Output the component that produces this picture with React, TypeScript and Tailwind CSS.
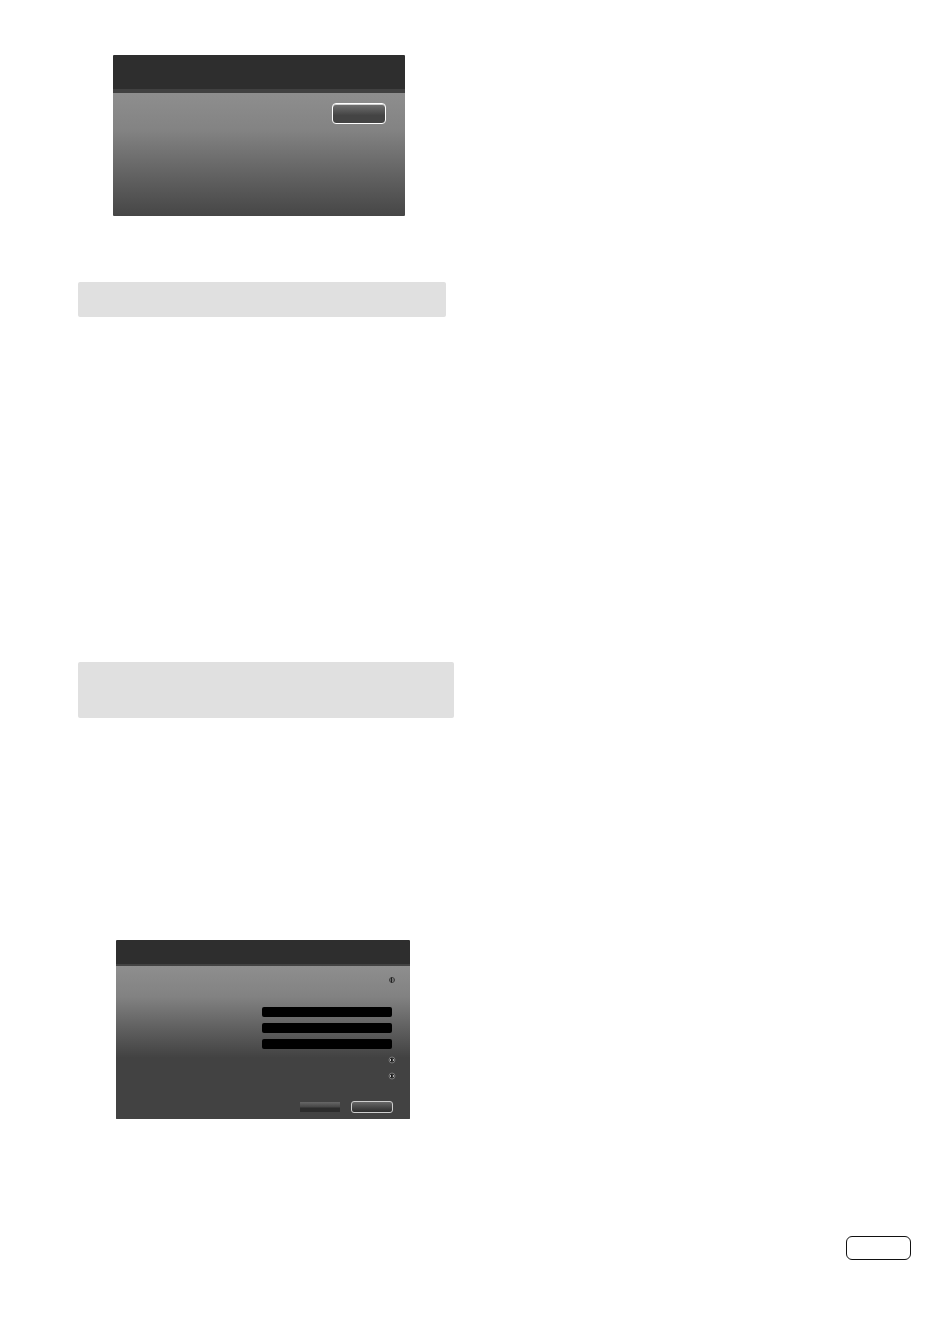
type Row = { kind: 'blank' } | { kind: 'option'; label: string; dark: boolean } | { kind: 'field'; label: string };

const rows: Row[] = [
  { kind: 'option', label: 'First option', dark: true },
  { kind: 'blank' },
  { kind: 'field', label: 'First field' },
  { kind: 'field', label: 'Second field' },
  { kind: 'field', label: 'Third field' },
  { kind: 'option', label: 'Second option', dark: false },
  { kind: 'option', label: 'Third option', dark: false },
];

function OptionIcon({ dark }: { dark: boolean }) {
  if (dark) {
    return (
      <svg viewBox="0 0 8 8" className="size-2" aria-hidden="true">
        <circle cx="4" cy="4" r="2.5" fill="#8a8a8a" stroke="#333333" strokeWidth="0.9" />
        <path d="M3.5 1.5v5" stroke="#1c1c1c" />
        <path d="M1 4h6" stroke="#3a3a3a" strokeWidth="0.6" />
      </svg>
    );
  }
  return (
    <svg viewBox="0 0 8 8" className="size-2" aria-hidden="true">
      <circle cx="4" cy="4" r="3" fill="#333333" stroke="#858585" strokeWidth="0.8" />
      <path d="M2.5 3v2" stroke="#c4c4c4" />
      <path d="M3.5 2.5v3" stroke="#161616" />
      <path d="M5.5 3v2" stroke="#b0b0b0" />
    </svg>
  );
}

function SettingRow({ row }: { row: Row }) {
  if (row.kind === 'option') {
    return (
      <div className="flex h-4 items-center justify-end pr-[14px]">
        <button type="button" aria-label={row.label} className="flex">
          <OptionIcon dark={row.dark} />
        </button>
      </div>
    );
  }
  if (row.kind === 'field') {
    return (
      <div className="flex h-4 items-center justify-end pr-[18px]">
        <input
          type="text"
          aria-label={row.label}
          className="h-[10px] w-[130px] rounded-[2px] bg-black px-1 text-[8px] text-white"
        />
      </div>
    );
  }
  return <div className="h-4" />;
}

export default function App() {
  return (
    <main className="flex flex-col bg-white pt-[55px] pr-[22px] pb-[57px] pl-[78px] font-['Liberation_Sans',sans-serif]">
      <section className="ml-[35px] w-full max-w-[292px] overflow-hidden rounded-[1px]">
        <header className="h-[38px] border-b-4 border-[#414141] bg-[#2e2e2e]" />
        <div className="flex h-[123px] items-start justify-end bg-linear-to-b from-[#8e8e8e] via-[#838383] via-30% to-[#464646] pt-[10px] pr-[19px]">
          <button
            type="button"
            aria-label="Confirm"
            className="h-[21px] w-[54px] rounded-[4px] border border-white bg-linear-to-b from-[#737373] via-[#444444] via-60% to-[#444444] shadow-[inset_0_1px_0_#d2d2d2]"
          />
        </div>
      </section>

      <div className="mt-[66px] h-[35px] w-full max-w-[368px] rounded-[2px] bg-[#e0e0e0]" />

      <div className="mt-[345px] h-14 w-full max-w-[376px] rounded-[2px] bg-[#e0e0e0]" />

      <section className="mt-[222px] ml-[38px] w-full max-w-[294px] overflow-hidden rounded-[1px]">
        <header className="h-[26px] border-b-2 border-[#434343] bg-[#2e2e2e]" />
        <form className="bg-[#424242] bg-linear-to-b from-[#8e8e8e] via-[#828282] via-20% to-[#424242] to-60% pt-[6px] pb-[6px]">
          {rows.map((row, index) => (
            <SettingRow key={index} row={row} />
          ))}
          <div className="mt-[17px] flex items-center justify-end gap-[11px] pr-[17px]">
            <button
              type="button"
              aria-label="Cancel"
              className="h-[10px] w-10 bg-linear-to-b from-[#676767] via-[#464646] via-50% to-[#2c2c2c] to-60%"
            />
            <button
              type="button"
              aria-label="Save"
              className="h-3 w-[42px] rounded-[3px] border border-[#cecece] bg-linear-to-b from-[#686868] to-[#2d2d2d]"
            />
          </div>
        </form>
      </section>

      <footer className="mt-[117px] flex justify-end">
        <div className="h-6 w-[65px] rounded-[6px] border border-[#111111]" />
      </footer>
    </main>
  );
}
